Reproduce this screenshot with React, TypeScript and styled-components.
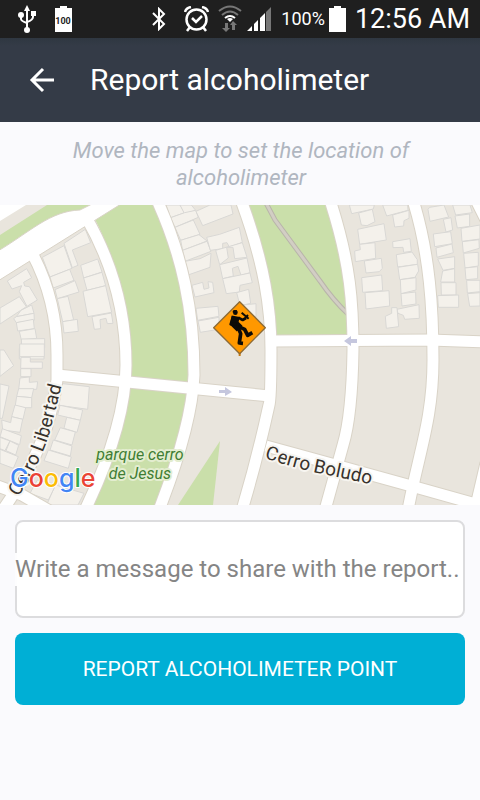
import React from "react";
import styled, { createGlobalStyle } from "styled-components";

const GlobalStyle = createGlobalStyle`
  * { box-sizing: border-box; }
  body {
    margin: 0;
    background: #fafafd;
    font-family: Roboto, "Liberation Sans", sans-serif;
  }
`;

const Page = styled.div`
  display: flex;
  flex-direction: column;
  min-height: 100vh;
  background: #fafafd;
`;

const StatusBar = styled.div`
  display: flex;
  align-items: center;
  justify-content: space-between;
  height: 38px;
  padding: 0 10px 0 18px;
  background: #1f1f1f;
  color: #fff;
`;

const StatusGroup = styled.div<{ $gap: number }>`
  display: flex;
  align-items: center;
  gap: ${(p) => p.$gap}px;
  svg { display: block; flex: none; }
`;

const StatusText = styled.span<{ $size: number }>`
  font-size: ${(p) => p.$size}px;
  line-height: 38px;
  white-space: nowrap;
`;

const Header = styled.header`
  display: flex;
  align-items: center;
  gap: 24px;
  height: 84px;
  padding: 0 18px;
  background: linear-gradient(#2f3741, #343b47 8px);
  color: #fff;
`;

const BackButton = styled.button`
  display: flex;
  align-items: center;
  justify-content: center;
  width: 48px;
  height: 48px;
  padding: 0;
  border: 0;
  background: none;
  color: inherit;
`;

const Title = styled.h1`
  margin: 0;
  font-size: 30px;
  font-weight: 400;
  line-height: 36px;
  white-space: nowrap;
`;

const Hint = styled.p`
  margin: 0;
  padding: 15px 60px 14px 62px;
  color: #b0b6c0;
  font-size: 22px;
  font-style: italic;
  line-height: 27px;
  text-align: center;
`;

const MapSvg = styled.svg`
  display: block;
  width: 100%;
  height: 300px;
  background: #e9e5dd;
`;

const Form = styled.form`
  display: flex;
  flex-direction: column;
  gap: 15px;
  padding: 15px;
`;

const Field = styled.label`
  display: flex;
  align-items: center;
  height: 98px;
  border: 2px solid #dcdcde;
  border-radius: 8px;
  background: #fff;
`;

const MessageInput = styled.input`
  flex: 1;
  min-width: 0;
  height: 33px;
  margin: 0 -2px;
  padding: 0;
  border: 0;
  outline: 0;
  background: linear-gradient(#fdfdfe, #fdfdfe) left / 2px 100% no-repeat;
  color: #333;
  font-family: inherit;
  font-size: 24px;
  &::placeholder { color: #858585; opacity: 1; }
`;

const SubmitButton = styled.button`
  height: 72px;
  border: 0;
  border-radius: 8px;
  background: #00afd5;
  color: #fff;
  font-family: inherit;
  font-size: 21px;
`;

const UsbIcon = () => (
  <svg width="18" height="28" viewBox="0 0 18 28" fill="none" stroke="#fff" strokeWidth="2">
    <path d="M9 5v19M3 10v4q0 2 6 4M15 9v3q0 3-6 5" />
    <path d="M9 0l3 6H6z" fill="#fff" stroke="none" />
    <circle cx="9" cy="25" r="3" fill="#fff" stroke="none" />
    <circle cx="3" cy="10" r="3" fill="#fff" stroke="none" />
    <path d="M13 6h5v5h-5z" fill="#fff" stroke="none" />
  </svg>
);

const BatteryIcon = ({ label }: { label?: string }) => (
  <svg width="17" height="26" viewBox="0 0 17 26">
    <path d="M0 2h5V0h7v2h5v24H0z" fill="#fff" />
    {label && (
      <text x="8" y="18" textAnchor="middle" fontFamily="Roboto" fontSize="9" fontWeight="700" fill="#1f1f1f">
        {label}
      </text>
    )}
  </svg>
);

const BluetoothIcon = () => (
  <svg width="14" height="24" viewBox="0 0 14 24" fill="none" stroke="#fff" strokeWidth="2">
    <path d="M1 6l11 11-5 5V2l5 5L1 18" />
  </svg>
);

const AlarmIcon = () => (
  <svg width="25" height="26" viewBox="0 0 25 26" fill="none" stroke="#fff" strokeWidth="2.500">
    <circle cx="12.500" cy="13.500" r="10" />
    <path d="M8 12l4 4 6-6M1 6q1-4 6-5M24 6q-1-4-6-5M6 21l-3 4M19 21l3 4" />
  </svg>
);

const WifiIcon = () => (
  <svg width="24" height="28" viewBox="0 0 24 28" fill="none" stroke="#777" strokeWidth="2">
    <path d="M1 6q11-9 22 0M4 10q8-7 16 0" />
    <path d="M7 13q5-4 10 0" stroke="#fff" />
    <path d="M9 14q3-2 6 0l-3 3z" fill="#fff" stroke="none" />
    <path d="M7 18h3v5h2l-4 4-4-4h3zM14 25h3v-5h2l-4-4-3 4h2z" fill="#777" stroke="none" />
  </svg>
);

const SignalIcon = () => (
  <svg width="25" height="26" viewBox="0 0 25 26" fill="#fff">
    <path d="M0 25l5-5v5zM7 18l4-4v11H7zM13 12l5-5v18h-5z" />
    <path d="M19 6l5-5v24h-5z" fill="#777" />
  </svg>
);

const ArrowIcon = () => (
  <svg width="26" height="26" viewBox="0 0 26 26" fill="none" stroke="#fff" strokeWidth="3">
    <path d="M25 13H3M14 2L3 13l11 11" />
  </svg>
);

const ROADS = [
  "M32 253Q57 300 57 355V380Q52 415 42 440Q28 475 4 508",
  "M86 217C112 262 126 310 126 365Q126 425 85 510",
  "M157 200C182 255 194 310 194 375Q192 425 159 510",
  "M241 200C265 265 271 310 271 350Q271 400 269 405Q257 460 242 510",
  "M330 200C351 265 353 305 353 350Q352 415 343 445L325 510",
  "M413 200C430 255 433 310 433 360C433 420 418 455 408 510",
  "M476 200L490 228",
  "M272 341L430 340L485 342",
  "M57 375L270 396",
  "M266 446L310 458L415 487L490 508",
  "M-5 485L22 495L55 514",
  "M486 463L475 510",
];

/* Building footprints, one group per block; each group is drawn on a grid three times finer than the map. */
const BUILDINGS: { x: number; y: number; shapes: string[] }[] = [
  {
    x: 0,
    y: 200,
    shapes: [
      "M127 172L192 137L216 205L150 231z",
      "M192 130L256 88L272 128L217 150L234 196L217 203z",
      "M150 231L209 208L222 241L160 264z",
      "M165 269L225 242L237 276L172 296z",
      "M172 296L204 289L221 360L188 365z",
      "M188 365L232 358L235 394L192 399z",
      "M242 196L293 177L306 216L251 234z",
      "M251 234L306 217L317 257L261 271z",
      "M249 274L317 257L335 337L263 350z",
      "M276 350L334 339L339 370L322 371L318 355L300 359L302 386L283 388z",
      "M22 243L80 206L95 233L71 247L74 258L88 260L112 300L81 319L58 275L65 257L36 267z",
      "M0 324L58 290L79 320L0 372z",
      "M63 331L95 315L102 340L49 350z",
      "M41 356L49 350L102 340L103 361L49 368z",
      "M49 368L100 358L103 386L53 393z",
      "M58 394L105 386L110 415L64 420z",
      "M64 417L134 416V443H65z",
      "M58 445H132V477H58z",
    ],
  },
  {
    x: 150,
    y: 200,
    shapes: [
      "M48 15L90 15L104 38L62 53z",
      "M90 15H124L137 31L104 42z",
      "M62 53L104 38L137 31L145 52L75 82z",
      "M75 82L130 60L150 103L92 121z",
      "M92 121L147 104L171 123L98 151z",
      "M98 151L171 124L183 154L105 184z",
      "M105 184L150 176L183 160L180 202L117 224z",
      "M138 34L180 15H243L249 42L158 77z",
      "M170 112L209 103L268 82L277 127L238 141L231 128L218 130V146L181 151z",
      "M197 151L277 128L291 172L254 176L249 142H230L235 174L209 194z",
      "M209 194L291 174L300 218L273 226L264 199L247 205L250 228L218 236z",
      "M218 236L300 219L307 248L270 256L268 276L229 281z",
      "M126 256L158 247L162 268L177 264L174 245L188 247L192 278L135 291z",
      "M138 325L204 319L207 349L143 361z",
      "M144 363L207 352V388L151 397z",
      "M260 278L296 268L302 310L270 317z",
      "M280 315L318 311V350H285z",
    ],
  },
  {
    x: 310,
    y: 200,
    shapes: [
      "M118 15H193L190 27L125 41z",
      "M146 39L187 28L195 65L171 77L154 75z",
      "M143 88L222 71L229 120L149 133z",
      "M149 133L195 128L197 175L136 185L134 153L151 149z",
      "M163 183L214 175L217 205L208 215L168 219z",
      "M155 233L215 225L218 272L158 277z",
      "M165 278L237 272L239 318L168 327z",
      "M218 15H293L294 31L230 48z",
      "M248 45L297 31V55L282 62L281 78L254 81z",
      "M248 125L300 116L304 154L281 157L279 142L249 143z",
      "M259 164L306 156L322 179V193L263 201z",
      "M264 202L323 193L326 213L315 232L269 239z",
      "M271 239L318 233V270L273 281z",
      "M273 281L317 276L318 312L276 318z",
      "M261 328L327 314L328 355L284 358L280 346L264 340z",
      "M245 323H261L266 380L229 385L226 349L245 340z",
      "M359 22L402 15L416 51L360 64L354 28z",
      "M400 58L423 53L428 90L408 96z",
      "M370 102L422 95L427 131L374 140z",
      "M378 144L426 132L430 158L381 172z",
      "M383 177L434 170V205L399 211z",
      "M398 213L434 206V246H392z",
      "M393 248H438V285H394z",
      "M383 287L446 285V322H385z",
      "M428 15H480L487 38L437 45z",
      "M435 48L479 42V79L442 84z",
      "M453 85L510 75V117L456 124z",
      "M457 125L507 119L508 145L460 159z",
      "M461 160L505 157V198L465 204z",
      "M465 204L503 200V236L468 239z",
      "M470 241H510V275L472 279z",
      "M473 281L510 278V318L479 319z",
    ],
  },
  {
    x: 0,
    y: 350,
    shapes: [
      "M0 0L12 0L41 47L0 79z",
      "M59 -18H133V20H59z",
      "M63 22H91V36H127V55H62z",
      "M62 56H93V80H62z",
      "M60 84L88 81V97L113 95L110 118H56z",
      "M56 116H101L95 143L50 139z",
      "M50 139L95 143V173H45z",
      "M45 165L77 173L69 208L35 200z",
      "M35 200L68 208L60 247L8 240L5 210L32 218z",
      "M7 236L64 257L59 284L0 260z",
      "M0 262L30 273L15 302L0 296z",
      "M30 273L56 286L47 315L18 302z",
      "M0 298L55 320L40 355L0 340z",
      "M0 102L27 108L7 205L0 205z",
      "M188 101L268 110L263 178L177 166z",
      "M180 166L248 180L241 211L173 195z",
      "M200 202L241 211L231 247L192 235z",
      "M181 233L226 246L216 285L164 270z",
      "M160 270L216 288L211 318L150 300z",
      "M145 300L214 321L205 355L132 332z",
      "M166 405L252 430L234 465H140z",
      "M112 390L168 403L145 450L90 430z",
    ],
  },
];

const LocationMap = () => (
  <MapSvg viewBox="0 205 480 300" preserveAspectRatio="xMidYMid slice" role="img" aria-label="Map">
    <path d="M0 205H26L0 221z" fill="#fff" />
    <path d="M0 235L47 205H92L80 210Q55 213 0 251z" fill="#cadfaa" />
    <path d="M95 219L119 205H158C182 255 194 310 194 375Q192 425 161 505H87Q126 425 126 365Q124 275 95 219z" fill="#cadfaa" />
    <path d="M242 205H331C351 265 353 305 353 341H271Q270 270 242 205z" fill="#cadfaa" />
    <path d="M220 441L178 505H213z" fill="#cadfaa" />
    <g fill="none" strokeLinecap="butt">
      <path d="M266 203L275 220L320 281Q333 300 348 314" stroke="#b9b5aa" strokeWidth="5" />
      <path d="M266 203L275 220L320 281Q333 300 348 314" stroke="#d2cec4" strokeWidth="3" />
    </g>
    {BUILDINGS.map((b) => (
      <g
        key={`${b.x}-${b.y}`}
        transform={`translate(${b.x} ${b.y}) scale(.3333)`}
        fill="#f4f1eb"
        stroke="#d9d8d5"
        strokeWidth="3"
      >
        {b.shapes.map((d) => <path key={d} d={d} />)}
      </g>
    ))}
    <g fill="none" stroke="#d9d3c7" strokeWidth="13">
      {ROADS.map((d) => <path key={d} d={d} />)}
    </g>
    <path d="M-2 251C30 232 50 211 80 210L92 204H121L-2 281z" fill="#fff" stroke="#d9d3c7" />
    <g fill="none" stroke="#fff" strokeWidth="11">
      {ROADS.map((d) => <path key={d} d={d} />)}
    </g>
    <g fill="#c5c7de">
      <path d="M344 341L351 336V339H357V343H351V346z" />
      <path d="M232 392L225 387V390H219V393H225V396z" />
    </g>

    <defs>
      <path id="libertad" d="M18 497Q40 466 51 428L63 380" />
      <path id="boludo" d="M264 458Q295 468 318 473L375 485" />
    </defs>
    <g fontFamily="Roboto" stroke="#f7f5f0" strokeWidth="4" strokeLinejoin="round" paintOrder="stroke">
      <g fontSize="19" fill="#37322c">
        <text><textPath href="#libertad">Cerro Libertad</textPath></text>
        <text><textPath href="#boludo">Cerro Boludo</textPath></text>
      </g>
      <g fontSize="16" fontStyle="italic" fill="#3f7d33" stroke="#e3edcf" textAnchor="middle">
        <text x="140" y="460">parque cerro</text>
        <text x="140" y="479">de Jesus</text>
      </g>
      <text x="10" y="487" fontFamily="Inter" fontSize="25" fontWeight="500" stroke="#fff" strokeWidth="2">
        <tspan fill="#4285f4">G</tspan>
        <tspan fill="#ea4335">o</tspan>
        <tspan fill="#fbbc05">o</tspan>
        <tspan fill="#4285f4">g</tspan>
        <tspan fill="#34a853">l</tspan>
        <tspan fill="#ea4335">e</tspan>
      </text>
    </g>

    <g transform="translate(205 295) scale(.3333)">
      <path d="M104 170V183" stroke="#c47a12" strokeWidth="6" />
      <path d="M104 20L181 98L104 176L26 98z" fill="#ff9800" stroke="#8c6a35" strokeWidth="4" strokeLinejoin="round" />
      <g fill="none" stroke="#0d0b07" strokeLinejoin="round">
        <path d="M92 64L88 85L104 101" strokeWidth="24" />
        <path d="M100 68L113 75L123 69" strokeWidth="8" />
        <path d="M84 65L77 88L94 86" strokeWidth="8" />
        <path d="M100 94L119 103L128 121L142 113" strokeWidth="11" />
        <path d="M99 97L107 116L103 144L114 145" strokeWidth="11" />
        <path d="M110 53L131 71M121 69L129 60" strokeWidth="6" />
      </g>
      <circle cx="91" cy="53" r="7" fill="#0d0b07" />
      <path d="M82 52L86 45H95L98 52z" fill="#0d0b07" />
    </g>
  </MapSvg>
);

export default function App() {
  return (
    <Page>
      <GlobalStyle />
      <StatusBar>
        <StatusGroup $gap={19}>
          <UsbIcon />
          <BatteryIcon label="100" />
        </StatusGroup>
        <StatusGroup $gap={9}>
          <StatusGroup $gap={18}>
            <BluetoothIcon />
            <AlarmIcon />
          </StatusGroup>
          <StatusGroup $gap={5}>
            <WifiIcon />
            <SignalIcon />
          </StatusGroup>
          <StatusGroup $gap={4}>
            <StatusText $size={18}>100%</StatusText>
            <BatteryIcon />
          </StatusGroup>
          <StatusText $size={27}>12:56 AM</StatusText>
        </StatusGroup>
      </StatusBar>
      <Header>
        <BackButton type="button" aria-label="Back">
          <ArrowIcon />
        </BackButton>
        <Title>Report alcoholimeter</Title>
      </Header>
      <main>
        <Hint>Move the map to set the location of alcoholimeter</Hint>
        <LocationMap />
        <Form onSubmit={(e: React.FormEvent) => e.preventDefault()}>
          <Field>
            <MessageInput aria-label="Message" placeholder="Write a message to share with the report.." />
          </Field>
          <SubmitButton type="submit">REPORT ALCOHOLIMETER POINT</SubmitButton>
        </Form>
      </main>
    </Page>
  );
}
